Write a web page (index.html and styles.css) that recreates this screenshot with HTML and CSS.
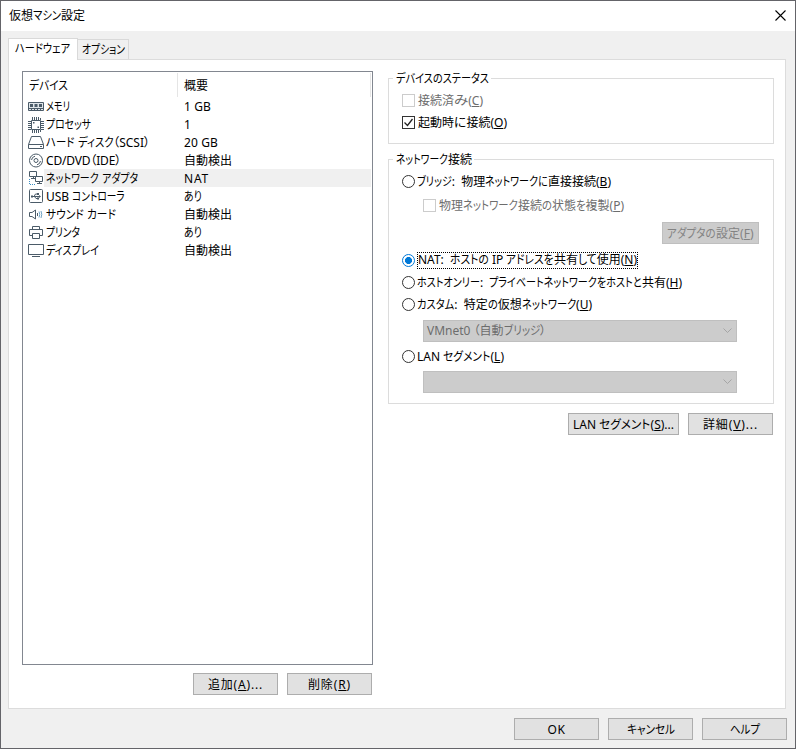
FILE: index.html
```html
<!DOCTYPE html>
<html lang="ja">
<head>
<meta charset="utf-8">
<title>仮想マシン設定</title>
<link rel="stylesheet" href="styles.css">
</head>
<body>
<div class="window">
  <header class="titlebar">
    <span class="title" data-w="76">仮想マシン設定</span>
    <svg class="close" width="11" height="11" viewBox="0 0 11 11"><path d="M.5.5l10 10M10.500.5l-10 10"/></svg>
  </header>
  <nav class="tabs">
    <div class="tab active"><span data-w="55">ハードウェア</span></div>
    <div class="tab"><span data-w="43">オプション</span></div>
  </nav>
  <main class="panel">
    <section class="left">
      <div class="list">
        <div class="head"><div class="h-name"><span data-w="39">デバイス</span></div><div class="h-val"><span data-w="24">概要</span></div></div>
        <div class="row"><svg class="icon" viewBox="0 0 16 16"><path class="cut" d="M.5 3.500h15v8H.5z"/><path d="M.5 3.500h15v8H.5zM.5 9.500h15"/><path class="fill" d="M2 5h3v3H2zM6.500 5h3v3h-3zM11 5h3v3h-3zM3 10h1v2H3zM6 10h1v2H6zM9 10h1v2H9zM12 10h1v2h-1z"/></svg><span class="name"><span data-w="24">メモリ</span></span><span class="val"><span data-w="27">1 GB</span></span></div>
        <div class="row"><svg class="icon" viewBox="0 0 16 16"><path d="M3.500 3.500h9v9h-9zM4.500 0v3M6.500 0v3M8.500 0v3M10.500 0v3M12.500 1v2M4.500 13v3M6.500 13v3M8.500 13v3M10.500 13v3M12.500 13v2M0 4.500h3M0 6.500h3M0 8.500h3M0 10.500h3M0 12.500h3M13 4.500h3M13 6.500h3M13 8.500h3M13 10.500h3M13 12.500h3"/><path class="fill" d="M5 5h1.500v1.500H5zM9.500 9.500H11V11H9.500z"/></svg><span class="name"><span data-w="45">プロセッサ</span></span><span class="val"><span>1</span></span></div>
        <div class="row"><svg class="icon" viewBox="0 0 16 16"><path d="M3.500 1.500h9l3 8v4H.5v-4zM.5 9.500h15M12 11.500h2"/></svg><span class="name"><span data-w="104">ハード ディスク（SCSI）</span></span><span class="val"><span data-w="34">20 GB</span></span></div>
        <div class="row"><svg class="icon" viewBox="0 0 16 16"><circle cx="8" cy="7.500" r="6.500"/><circle cx="8" cy="7.500" r="2"/><path d="M3.500 7A4.500 4.500 0 0 1 7 3.200M12.500 8A4.500 4.500 0 0 1 9 11.800"/></svg><span class="name"><span data-w="75">CD/DVD（IDE）</span></span><span class="val"><span data-w="48">自動検出</span></span></div>
        <div class="row selected"><svg class="icon" viewBox="0 0 16 16"><path d="M1.500.5h7v5h-7zM3 7.500h4M5.500 5.500v2M7.500 5.500h7v5h-7zM9 12.500h5M11.500 10.500v2"/><path class="blue" d="M1.500 8v5.500H8"/></svg><span class="name"><span data-w="92">ネットワーク アダプタ</span></span><span class="val"><span data-w="25">NAT</span></span></div>
        <div class="row"><svg class="icon" viewBox="0 0 16 16"><rect x="1.500" y=".5" width="13" height="13" rx="1"/><path d="M4 7.500h8M6 7.500l1.500-2.500H10M6.500 7.500L8 9.500h2"/><path class="fill" d="M3 6.500h2v2H3zM9 4h2v2H9zM9 8.500h2v2H9zM11 6l2 1.500L11 9z"/></svg><span class="name"><span data-w="79">USB コントローラ</span></span><span class="val"><span data-w="18">あり</span></span></div>
        <div class="row"><svg class="icon" viewBox="0 0 16 16"><path d="M1.500 5.500v4H4L7.500 12V3L4 5.500zM9.500 6v3"/><path class="blue solid" d="M11 4.500q1.500 3 0 6M13 4q1.500 3.500 0 7"/></svg><span class="name"><span data-w="70">サウンド カード</span></span><span class="val"><span data-w="48">自動検出</span></span></div>
        <div class="row"><svg class="icon" viewBox="0 0 16 16"><path d="M4.500 4.500v-3h7v3M4 10.500H1.500v-6h13v6H12M4.500 8.500h7v5h-7z"/></svg><span class="name"><span data-w="34">プリンタ</span></span><span class="val"><span data-w="18">あり</span></span></div>
        <div class="row"><svg class="icon" viewBox="0 0 16 16"><path d="M.5 1.500h15v10H.5zM4 13.500h8"/></svg><span class="name"><span data-w="53">ディスプレイ</span></span><span class="val"><span data-w="48">自動検出</span></span></div>
      </div>
      <div class="actions">
        <button class="btn"><span data-w="55">追加(<u>A</u>)...</span></button>
        <button class="btn"><span data-w="43">削除(<u>R</u>)</span></button>
      </div>
    </section>
    <section class="right">
      <fieldset class="group status">
        <legend><span data-w="93">デバイスのステータス</span></legend>
        <label class="opt off"><i class="box"></i><span data-w="65">接続済み(<u>C</u>)</span></label>
        <label class="opt"><i class="box"><svg width="11" height="11" viewBox="0 0 11 11"><path d="M1.500 5.500l3 3 5-6.500"/></svg></i><span data-w="89">起動時に接続(<u>O</u>)</span></label>
      </fieldset>
      <fieldset class="group network">
        <legend><span data-w="76">ネットワーク接続</span></legend>
        <label class="opt"><i class="radio"></i><span data-w="194">ブリッジ:  物理ネットワークに直接接続(<u>B</u>)</span></label>
        <label class="opt off sub"><i class="box"></i><span data-w="185">物理ネットワーク接続の状態を複製(<u>P</u>)</span></label>
        <div class="adapter"><button class="btn disabled"><span data-w="86">アダプタの設定(<u>F</u>)</span></button></div>
        <label class="opt nat"><i class="radio on"></i><b class="focus"><span data-w="219">NAT:  ホストの IP アドレスを共有して使用(<u>N</u>)</span></b></label>
        <label class="opt"><i class="radio"></i><span data-w="265">ホストオンリー:  プライベートネットワークをホストと共有(<u>H</u>)</span></label>
        <label class="opt"><i class="radio"></i><span data-w="175">カスタム:  特定の仮想ネットワーク(<u>U</u>)</span></label>
        <div class="combo"><span data-w="119">VMnet0 （自動ブリッジ）</span><svg width="9" height="6" viewBox="0 0 9 6"><path d="M.5.5l4 4 4-4"/></svg></div>
        <label class="opt lan"><i class="radio"></i><span data-w="87">LAN セグメント(<u>L</u>)</span></label>
        <div class="combo second"><span></span><svg width="9" height="6" viewBox="0 0 9 6"><path d="M.5.5l4 4 4-4"/></svg></div>
      </fieldset>
      <div class="actions more">
        <button class="btn wide"><span data-w="101">LAN セグメント(<u>S</u>)...</span></button>
        <button class="btn"><span data-w="55">詳細(<u>V</u>)...</span></button>
      </div>
    </section>
  </main>
  <footer class="footer">
    <button class="btn"><span data-w="18">OK</span></button>
    <button class="btn"><span data-w="48">キャンセル</span></button>
    <button class="btn"><span data-w="30">ヘルプ</span></button>
  </footer>
</div>
<script src="fit.js"></script>
</body>
</html>
```
FILE: styles.css
```css
* { box-sizing: border-box; }
body { margin: 0; }
body, button { font-family: "Noto Sans", "Noto Sans CJK JP", sans-serif; font-size: 12px; line-height: 16px; color: #000; font-feature-settings: "palt"; }
.window { width: 796px; height: 749px; background: #f0f0f0; border: 1px solid #646469; overflow: hidden; display: flex; flex-direction: column; }
span { white-space: pre; }
svg { display: block; }
u { text-underline-offset: 1px; text-decoration-thickness: 1px; }
i { font-style: normal; }
b { font-weight: normal; }
.kana { display: inline-block; transform-origin: 0 50%; }

.titlebar { height: 30px; flex: none; background: #fff; display: flex; align-items: center; justify-content: space-between; padding: 0 9px 1px 8px; }
.close path { fill: none; stroke: #000; stroke-width: 1.1; }

.tabs { height: 28px; margin-left: 7px; padding-top: 7px; display: flex; align-items: flex-end; flex: none; }
.tab { height: 20px; width: 51px; background: #f0f0f0; border: 1px solid #d9d9d9; border-left: 0; border-bottom: 0; padding: 2px 0 0 4px; }
.tab.active { position: relative; z-index: 1; height: 22px; width: 70px; margin-bottom: -1px; background: #fff; border-left: 1px solid #d9d9d9; padding: 2px 0 0 6px; }

.panel { flex: none; width: 778px; height: 650px; margin-left: 7px; background: #fff; border: 1px solid #dcdcdc; display: flex; }
.left { width: 351px; margin: 11px 0 0 13px; flex: none; }
.list { height: 594px; border: 1px solid #828790; }
.head { height: 25px; display: flex; }
.h-name { width: 155px; border-right: 1px solid #e5e5e5; padding: 5px 0 0 6px; margin-top: 1px; }
.h-val { width: 193px; border-right: 1px solid #e5e5e5; padding: 5px 0 0 6px; margin-top: 1px; }
.row { height: 18px; display: flex; align-items: center; padding-left: 5px; margin-right: 1px; }
.icon { width: 16px; height: 16px; flex: none; margin-top: 2px; fill: none; stroke: #4b5b68; stroke-width: 1; }
.icon .fill { fill: #4b5b68; stroke: none; }
.icon .cut { fill: #dfe5e9; stroke: none; }
.icon .blue { stroke: #3c8fc4; stroke-dasharray: 1 1; }
.icon .solid { stroke: #6fa3c4; stroke-dasharray: none; }
.name { width: 139px; padding-left: 2px; height: 18px; line-height: 20px; }
.val { flex: 1; height: 18px; line-height: 20px; padding-left: 1px; }
.selected .name, .selected .val { background: #f0f0f0; }

.actions { display: flex; justify-content: flex-end; gap: 9px; margin: 8px 1px 0 0; }
.btn { width: 85px; height: 22px; flex: none; padding: 2px 0 0; border: 1px solid #adadad; background: #e1e1e1; display: flex; align-items: center; justify-content: center; }
.btn.wide { width: 111px; }
.btn.disabled { width: 97px; border-color: #bfbfbf; background: #ccc; color: #838383; }

.right { width: 386px; margin: 0 0 0 15px; }
.group { margin: 0; padding: 0 0 0 13px; border: 1px solid #dcdcdc; min-width: 0; }
.group legend { height: 16px; padding: 0 2px 0 3px; margin-left: -9px; line-height: 18px; }
.status { margin-top: 10px; height: 74px; padding-top: 3px; }
.network { margin-top: 7px; height: 253px; }
.opt { height: 22px; display: flex; align-items: center; }
.opt > span { padding-top: 1px; }
.off { color: #6d6d6d; }
.box { width: 13px; height: 13px; margin-right: 3px; flex: none; border: 1px solid #333; background: #fff; }
.off .box { border-color: #ccc; }
.box path { fill: none; stroke: #222; stroke-width: 1.3; }
.radio { width: 13px; height: 13px; margin-right: 2px; flex: none; border: 1px solid #333; border-radius: 50%; background: #fff; }
.radio.on { border-color: #0078d7; background: radial-gradient(circle, #0078d7 0 3.2px, #fff 3.8px); }
.network > .opt:nth-of-type(1) { margin-top: 3px; }
.sub { margin: 2px 0 0 21px; }
.adapter { display: flex; margin: 6px 0 0 260px; }
.nat { margin-top: 5px; }
.focus { height: 17px; line-height: 16px; outline: 1px dotted #000; outline-offset: -1px; padding: 0 1px; }
.combo { width: 314px; height: 22px; margin: 5px 0 0 21px; border: 1px solid #bfbfbf; background: #ccc; color: #6d6d6d; display: flex; align-items: center; justify-content: space-between; padding: 0 4px 0 3px; }
.combo path { fill: none; stroke: #a5a5a5; }
.lan { margin-top: 3px; }
.combo.second { margin-top: 4px; }
.more { margin: 9px 1px 0 0; gap: 9px; }
.footer { display: flex; justify-content: flex-end; gap: 9px; padding: 9px 8px 0 0; }
```
FILE: fit.js
```js
// Condense the kana of each label so that the label fills its data-w width.
// Labels without kana have their tracking adjusted instead.
function wrapKana(el) {
  Array.from(el.childNodes).forEach(function (node) {
    if (node.nodeType !== 3) return;
    var parts = node.textContent.split(/([\u3041-\u30ff]+)/);
    parts.forEach(function (part, i) {
      if (!part) return;
      var piece = document.createTextNode(part);
      if (i % 2) {
        piece = document.createElement("span");
        piece.className = "kana";
        piece.textContent = part;
      }
      el.insertBefore(piece, node);
    });
    el.removeChild(node);
  });
}

document.querySelectorAll("[data-w]").forEach(function (el) {
  var want = Number(el.dataset.w);
  wrapKana(el);
  var have = el.getBoundingClientRect().width;
  var runs = Array.from(el.querySelectorAll(".kana"));
  if (!runs.length) {
    el.style.letterSpacing = ((want - have) / el.textContent.length).toFixed(3) + "px";
    return;
  }
  var widths = runs.map(function (k) { return k.getBoundingClientRect().width; });
  var total = widths.reduce(function (a, b) { return a + b; }, 0);
  var scale = (want - have + total) / total;
  runs.forEach(function (k, i) {
    k.style.transform = "scaleX(" + scale.toFixed(4) + ")";
    k.style.marginRight = (widths[i] * (scale - 1)).toFixed(3) + "px";
  });
});
```
